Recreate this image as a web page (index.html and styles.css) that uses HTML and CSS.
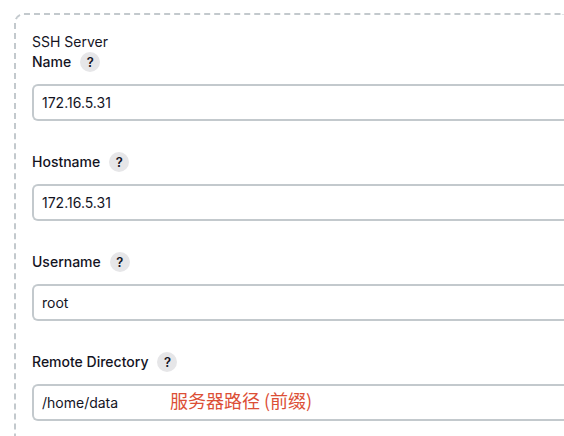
FILE: index.html
```html
<!DOCTYPE html>
<html lang="en">
<head>
<meta charset="utf-8">
<title>SSH Server</title>
<link rel="stylesheet" href="styles.css">
</head>
<body>
<form class="panel">
  <div class="panel-title">SSH Server</div>
  <div class="field">
    <div class="field-head"><label for="name">Name</label><button class="help" type="button">?</button></div>
    <input id="name" type="text" value="172.16.5.31">
  </div>
  <div class="field">
    <div class="field-head"><label for="hostname">Hostname</label><button class="help" type="button">?</button></div>
    <input id="hostname" type="text" value="172.16.5.31">
  </div>
  <div class="field">
    <div class="field-head"><label for="username">Username</label><button class="help" type="button">?</button></div>
    <input id="username" type="text" value="root">
  </div>
  <div class="field">
    <div class="field-head"><label for="directory">Remote Directory</label><button class="help" type="button">?</button></div>
    <input id="directory" type="text" value="/home/data">
    <span class="note" lang="zh-CN">服务器路径 (前缀)</span>
  </div>
</form>
</body>
</html>
```
FILE: styles.css
```css
* {
  box-sizing: border-box;
}

body {
  margin: 0;
  padding: 13px 0 0 14px;
  height: 100vh;
  overflow: hidden;
  background: #fff;
  color: #14141f;
  font: 14px/20px Inter, "Noto Sans CJK SC", sans-serif;
}

.panel {
  padding: 17px 0 30px 16px;
  border: 2px dashed #c3c9cd;
  border-right: 0;
  border-radius: 10px 0 0 0;
}

.field {
  position: relative;
  margin-bottom: 31px;
}

.field-head {
  display: flex;
  align-items: center;
  gap: 9px;
  margin-bottom: 12px;
  font-weight: 500;
}

.help {
  width: 20px;
  height: 20px;
  padding: 0;
  border: 0;
  border-radius: 50%;
  background: #e6e6e8;
  color: #14141f;
  font: 600 13px/20px Inter, sans-serif;
  text-align: center;
}

input {
  display: block;
  width: 100%;
  height: 37px;
  padding: 0 8px;
  border: 2px solid #c3c9cd;
  border-right: 0;
  border-radius: 6px 0 0 6px;
  background: #fff;
  color: #14141f;
  font: inherit;
}

.note {
  position: absolute;
  left: 138px;
  bottom: 9px;
  color: #dc4f36;
  font: 18px/24px "Noto Sans CJK SC", sans-serif;
}
```
